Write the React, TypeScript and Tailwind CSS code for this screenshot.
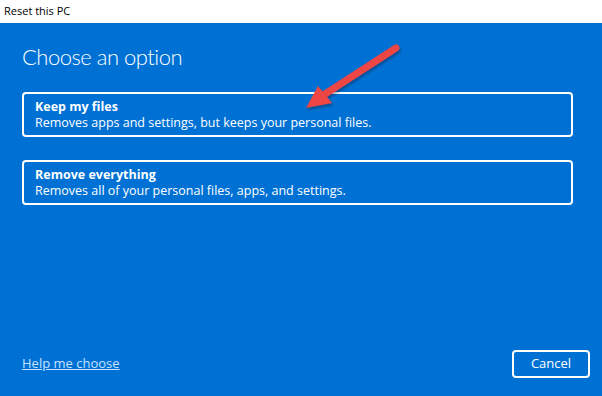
import React from 'react';

const options = [
  { title: 'Keep my files', desc: 'Removes apps and settings, but keeps your personal files.' },
  { title: 'Remove everything', desc: 'Removes all of your personal files, apps, and settings.' },
];

export default function App() {
  return (
    <div className="relative w-[602px] h-[396px] flex flex-col overflow-hidden font-['Open_Sans',sans-serif]">
      <div className="h-[23px] bg-white flex items-center px-[4px] text-[11px] text-black">Reset this PC</div>
      <div className="flex-1 bg-[#0071d4] flex flex-col pl-[22px] pr-[12px] text-white">
        <h1 className="mt-[20px] text-[22px] leading-[28px] tracking-[-0.5px] font-light font-['Lato',sans-serif]">Choose an option</h1>
        <div className="mt-[21px] flex flex-col gap-[23px]">
          {options.map((o) => (
            <button
              key={o.title}
              className="w-[551px] h-[45px] border-2 border-white rounded-[4px] text-left pl-[11px] flex flex-col justify-center"
            >
              <span className="text-[12.5px] leading-[16px] font-bold">{o.title}</span>
              <span className="text-[12.5px] leading-[16px]">{o.desc}</span>
            </button>
          ))}
        </div>
        <div className="mt-auto mb-[18px] flex items-center justify-between">
          <a className="text-[13px] underline text-[#c4e2ff]">Help me choose</a>
          <button className="w-[78px] h-[28px] border-2 border-white rounded-[4px] text-[13px]">Cancel</button>
        </div>
      </div>
      <svg className="absolute left-0 top-0 pointer-events-none" width="602" height="396">
        <defs>
          <filter id="sh" x="-20%" y="-20%" width="140%" height="140%">
            <feDropShadow dx="1" dy="2" stdDeviation="1.5" floodColor="#000" floodOpacity="0.35" />
          </filter>
        </defs>
        <g filter="url(#sh)">
          <line x1="396" y1="48" x2="322" y2="96" stroke="#ee4444" strokeWidth="7" strokeLinecap="round" />
          <polygon points="306,108 318,86 332,103" fill="#ee4444" />
        </g>
      </svg>
    </div>
  );
}
